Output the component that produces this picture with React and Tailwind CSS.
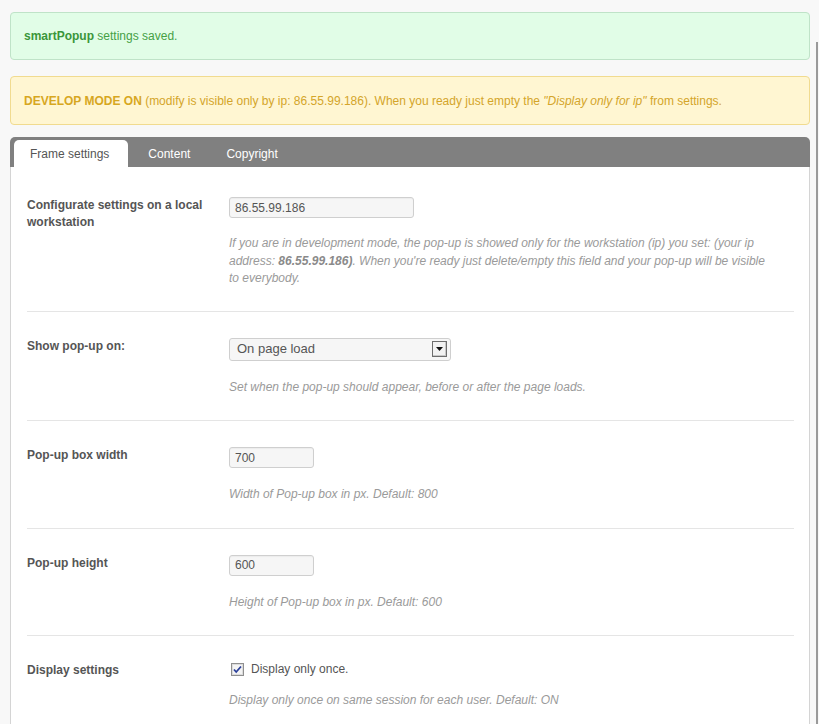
import React from 'react';

const Row = ({ label, first, children, desc, descMt = 'mt-[18px]' }) => (
  <div className={`flex border-b border-[#e5e5e5] ${first ? 'pt-[30px] pb-[23px]' : 'pt-[26px] pb-[24px]'}`}>
    <div className="w-[202px] shrink-0 pr-[16px] text-[12px] leading-[17px] font-bold text-[#555]">{label}</div>
    <div className="flex-1 min-w-0">
      {children}
      <p className={`${descMt} max-w-[540px] text-[12px] leading-[17.5px] italic text-[#9a9a9a]`}>{desc}</p>
    </div>
  </div>
);

const TextInput = ({ value, width }) => (
  <div className={`${width} h-[21px] flex items-center px-[5px] rounded-[3px] border border-[#cfcfcf] bg-[#f6f6f6] text-[12px] text-[#555] shadow-[inset_0_1px_1px_rgba(0,0,0,0.04)]`}>
    {value}
  </div>
);

const App = () => {
  return (
    <div className="flex min-h-[724px] bg-[#f8f8f8] font-['Liberation_Sans',Arial,sans-serif]">
      <div className="w-[800px] ml-[10px] pt-[12px]">
        {/* Notices */}
        <div className="h-[48px] flex items-center px-[13px] rounded-[4px] border border-[#bfe3c8] bg-[#e1fde7] text-[12px] text-[#45a045]">
          <span className="font-bold text-[#3a963a]">smartPopup</span>&nbsp;settings saved.
        </div>
        <div className="mt-[16px] h-[49px] flex items-center px-[13px] rounded-[4px] border border-[#f1db8f] bg-[#fff6d2] text-[12px] text-[#d4a52a]">
          <span className="font-bold text-[#d7a71f]">DEVELOP MODE ON</span>
          &nbsp;(modify is visible only by ip: 86.55.99.186). When you ready just empty the&nbsp;
          <span className="italic">"Display only for ip"</span>&nbsp;from settings.
        </div>

        {/* Tabs panel */}
        <div className="mt-[12px]">
          <div className="h-[30px] flex items-end gap-[5px] pl-[4px] rounded-t-[5px] bg-[#808080]">
            <div className="h-[27px] flex items-center pl-[16px] pr-[19px] rounded-t-[5px] bg-white text-[12px] text-[#555]">Frame settings</div>
            <div className="h-[27px] flex items-center px-[15px] text-[12px] text-white">Content</div>
            <div className="h-[27px] flex items-center px-[16px] text-[12px] text-white">Copyright</div>
          </div>
          <div className="bg-white border-x border-[#d4d4d4] pl-[16px] pr-[15px] pb-[40px]">
            <Row
              first
              descMt="mt-[17px]"
              label={<>Configurate settings on a local<br />workstation</>}
              desc={<>If you are in development mode, the pop-up is showed only for the workstation (ip) you set: (your ip address: <b className="text-[#8a8a8a]">86.55.99.186)</b>. When you're ready just delete/empty this field and your pop-up will be visible to everybody.</>}
            >
              <TextInput value="86.55.99.186" width="w-[185px]" />
            </Row>

            <Row label="Show pop-up on:" desc="Set when the pop-up should appear, before or after the page loads.">
              <div className="w-[222px] h-[23px] flex items-center justify-between pl-[7px] pr-[3px] rounded-[3px] border border-[#cfcfcf] bg-[#f6f6f6] text-[13px] text-[#555]">
                <span>On page load</span>
                <div className="w-[15px] h-[16px] flex items-center justify-center border border-[#6d6d6d] bg-[#f2f2f2] shadow-[inset_-1px_-1px_0_#c8c8c8]">
                  <svg width="7" height="4" viewBox="0 0 7 4"><path d="M0 0h7L3.5 4z" fill="#111" /></svg>
                </div>
              </div>
            </Row>

            <Row label="Pop-up box width" desc="Width of Pop-up box in px. Default: 800">
              <TextInput value="700" width="w-[85px]" />
            </Row>

            <Row label="Pop-up height" desc="Height of Pop-up box in px. Default: 600">
              <TextInput value="600" width="w-[85px]" />
            </Row>

            <Row label="Display settings" descMt="mt-[16px]" desc="Display only once on same session for each user. Default: ON">
              <div className="h-[14px] flex items-center gap-[7px] pl-[2px] text-[12px] text-[#555]">
                <svg width="13" height="13" viewBox="0 0 13 13">
                  <rect x="0.5" y="0.5" width="12" height="12" fill="#f4f4f4" stroke="#8f8f8f" />
                  <rect x="1.5" y="1.5" width="10" height="10" fill="none" stroke="#dcdcdc" />
                  <path d="M3 6.5l2.2 2.5L10 3.5" fill="none" stroke="#2a3f9a" strokeWidth="1.8" />
                </svg>
                <span>Display only once.</span>
              </div>
            </Row>
          </div>
        </div>
      </div>
      <div className="flex-1" />
      <div className="w-[2px] mt-[42px] mr-[1px] bg-[#9a9a9a]" />
    </div>
  );
};

export default App;
